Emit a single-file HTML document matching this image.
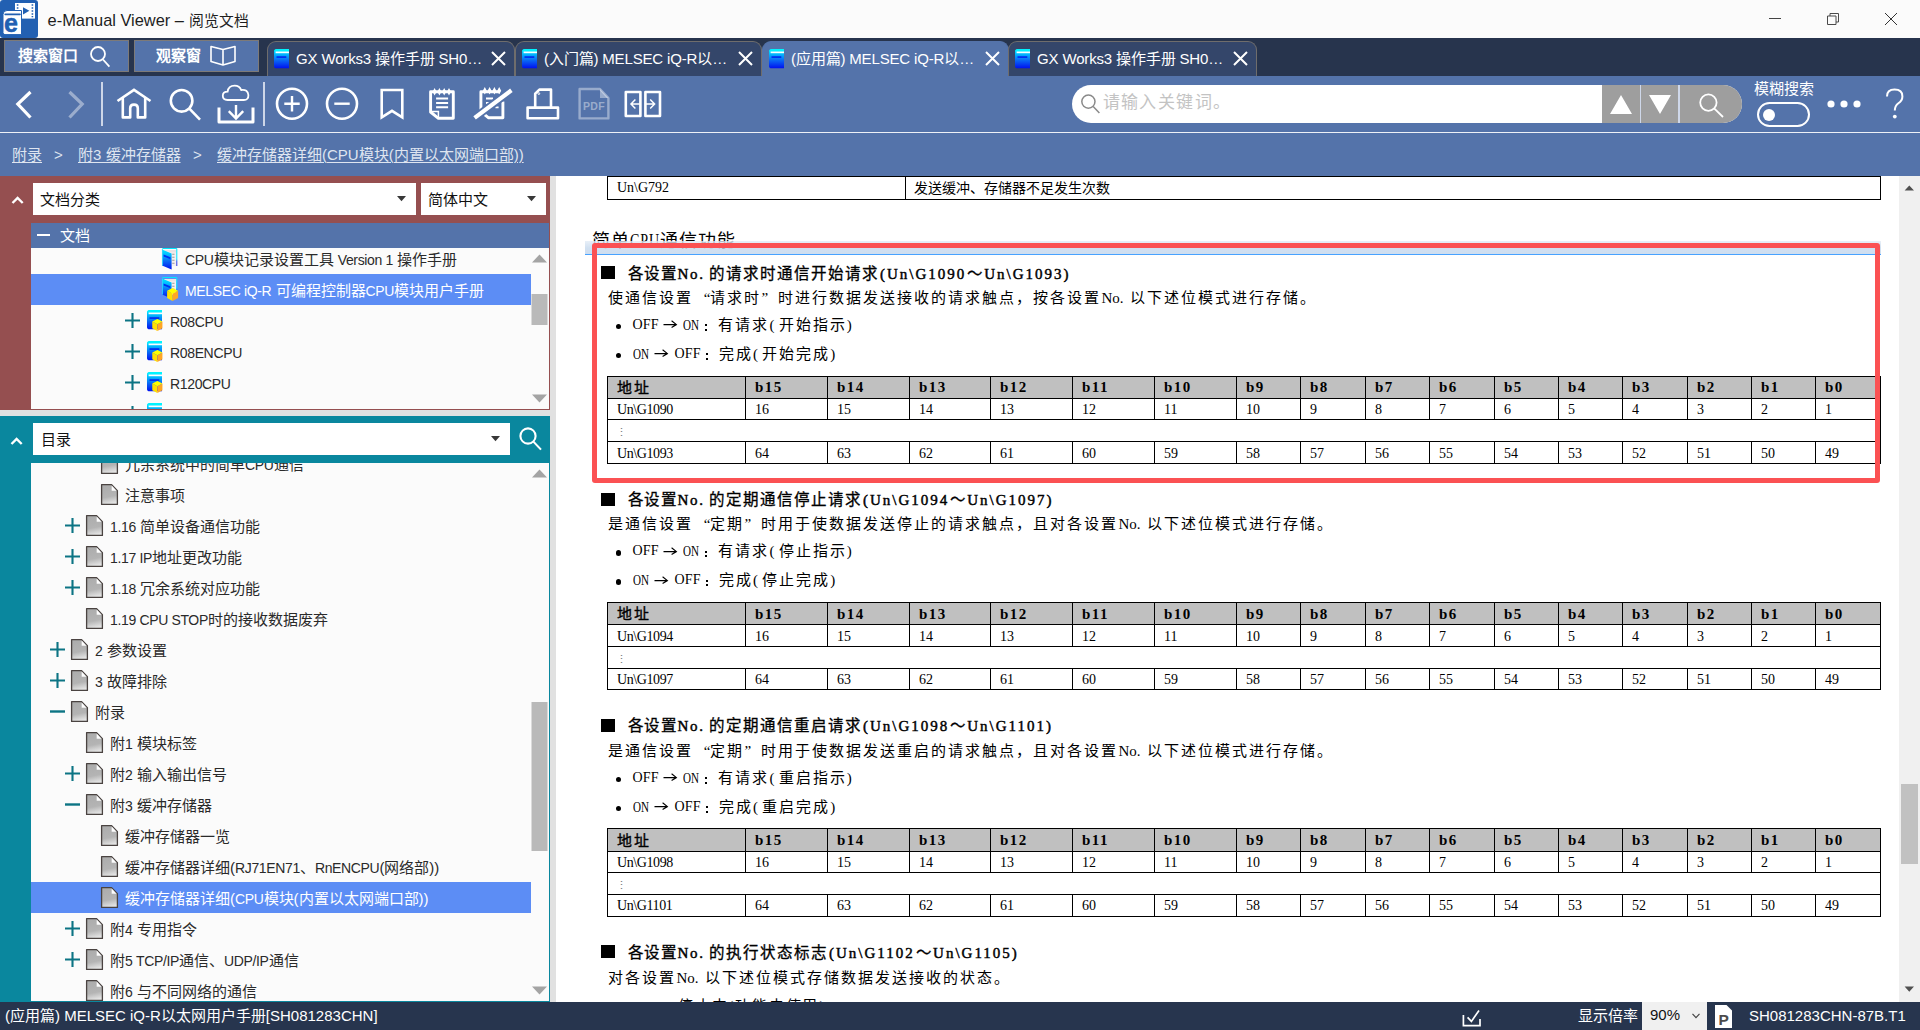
<!DOCTYPE html>
<html lang="zh-CN">
<head>
<meta charset="utf-8">
<title>e-Manual Viewer</title>
<style>
html,body{margin:0;padding:0}
body{width:1920px;height:1030px;overflow:hidden;position:relative;background:#fff;font-family:"Liberation Sans",sans-serif;color:#222}
.a{position:absolute}
.doc{font-family:"Liberation Serif",serif;color:#000}
.c{font-family:"Liberation Sans",sans-serif}
svg{position:absolute;overflow:visible}
#title{left:0;top:0;width:1920px;height:38px;background:#fbfbfb}
#title .t{left:47.6px;top:9.6px;font-size:16.4px;letter-spacing:0;line-height:20px;color:#1e1e1e;white-space:nowrap}
#tabs{left:0;top:38px;width:1920px;height:38px;background:#27344d}
.btn{top:2px;height:30px;border:1px solid #7d7a78;background:#5473aa;color:#fff;font-size:15px;font-weight:bold;line-height:30px;white-space:nowrap}
.btn span{top:0}
.tab{top:3px;height:36px;box-sizing:border-box;border:1px solid #6f6d6c;border-bottom:none;border-radius:9px 9px 0 0;background:#34466a;color:#fff;font-size:15px;letter-spacing:-0.15px;line-height:34px;white-space:nowrap}
.tab.act{background:#5473aa;border-color:#5473aa}
.tab .tx{left:28px;top:0}
#tool{left:0;top:76px;width:1920px;height:100px;background:#5473aa}
#tool .line{left:0;top:56px;width:1920px;height:1px;background:#eef1f7}
.bc{top:69px;font-size:15px;line-height:20px;color:#dfe5f0;white-space:nowrap}
.bc u{text-decoration-thickness:1px;text-underline-offset:2px}
#red{left:0;top:176px;width:550px;height:234px;background:#954f50}
#teal{left:0;top:416px;width:550px;height:586px;background:#0a879e}
.split{background:#e1e1e1}
.dd{background:#fff;height:32px;font-size:15px;line-height:33px;color:#111;white-space:nowrap}
.dd span{top:0}
.list{background:#fbfbfb;overflow:hidden}
.row{left:0;width:500px;height:31px;font-size:15px;line-height:34px;color:#2a2a2a;white-space:nowrap}
.row.sel{background:#5c8df5;color:#fff}
.row span{position:absolute;top:0}
.row i{font-style:normal;font-size:14px;letter-spacing:-0.35px}
#content{left:556px;top:176px;width:1343px;height:826px;background:#fff;overflow:hidden}
#vs{left:1899px;top:176px;width:21px;height:826px;background:#f0f0f0}
#status{left:0;top:1002px;width:1920px;height:28px;background:#27354e;color:#fff;font-size:15px;line-height:27px;white-space:nowrap}
#status span{top:0}
/* document */
.h{font-size:16px;font-weight:bold;letter-spacing:1.7px;line-height:20px;white-space:nowrap}
.p{font-size:15px;font-weight:300;letter-spacing:1.8px;line-height:20px;white-space:nowrap}
.sq{width:14px;height:13px;background:#000}
.dot{width:5.6px;height:5.6px;border-radius:3px;background:#000}
table.t{position:absolute;border-collapse:collapse;table-layout:fixed;font-size:14px;font-weight:300}
table.t td{border:1px solid #000;padding:1px 0 0 9px;height:19.4px;line-height:19px;white-space:nowrap;overflow:hidden}
table.t td:first-child{letter-spacing:-0.4px}
table.t tr.hd td:first-child{font-weight:500;-webkit-text-stroke:0.35px #000;letter-spacing:1.5px}
table.t tr.hd td{background:#c0c0c0;font-weight:bold;font-size:15px;letter-spacing:1.5px;height:20.5px}
</style>
</head>
<body>
<svg width="0" height="0" style="left:-10px;top:-10px">
<defs>
<linearGradient id="gfile" x1="0.2" y1="0.1" x2="0.35" y2="1"><stop offset="0" stop-color="#adadad"/><stop offset="0.6" stop-color="#b4b4b4"/><stop offset="1" stop-color="#e4e4e4"/></linearGradient>
<linearGradient id="gbook" x1="0" y1="0" x2="0" y2="1"><stop offset="0" stop-color="#00e4ff"/><stop offset="0.22" stop-color="#00c4ff"/><stop offset="0.55" stop-color="#0a70f5"/><stop offset="1" stop-color="#0010f0"/></linearGradient>
<linearGradient id="gedge" x1="0" y1="0" x2="0" y2="1"><stop offset="0" stop-color="#00e8ff"/><stop offset="0.6" stop-color="#00e0ff"/><stop offset="0.75" stop-color="#2a40e8"/><stop offset="1" stop-color="#2a30e0"/></linearGradient>
<symbol id="fi" viewBox="0 0 17 21" overflow="visible">
<path d="M0.6,0.6 H10.6 L16.4,6.6 V20.4 H0.6 Z" fill="url(#gfile)" stroke="#4a4341" stroke-width="1.3" stroke-linejoin="round"/>
<path d="M10.7,1.6 L15.5,6.7 H10.7 Z" fill="#fdfdfd"/>
</symbol>
<symbol id="bk" viewBox="0 0 15 19" overflow="visible">
<path d="M2.6,0 H15 V19.3 H2.6 Q0,19.3 0,16.7 V2.6 Q0,0 2.6,0 Z" fill="url(#gbook)"/>
<path d="M2.6,0 H15 V2.6 H0.2 Q0.3,0.2 2.6,0 Z" fill="#00f4ff"/>
<rect x="1.6" y="2.5" width="13.4" height="1.7" fill="#fafeff"/>
<rect x="2.5" y="7.2" width="9.8" height="1.8" fill="#0030f0"/>
</symbol>
<symbol id="cube" viewBox="0 0 11 13" overflow="visible">
<path d="M0,2.8 L5.5,5.6 V13 L0,10 Z" fill="#ffe000"/>
<path d="M5.5,5.6 L11,2.8 V10 L5.5,13 Z" fill="#ffa624"/>
<path d="M5.5,0 L11,2.8 L5.5,5.7 L0,2.8 Z" fill="#ffff00"/>
</symbol>
<symbol id="ob" viewBox="0 0 16 22" overflow="visible">
<path d="M2,2 H14.3 V18 H9.5 Z" fill="#f4eff1"/>
<path d="M2,2 H14.3 V4.6 H9 Z" fill="#ebe1e4"/>
<path d="M0.3,1.6 L0.7,0.5 H14.8 V18" stroke="url(#gedge)" stroke-width="1" fill="none"/>
<path d="M10.2,6.2 h2.3 M10.2,9.2 h2.3 M10.2,12.2 h2.3 M10.2,15.2 h2.3" stroke="#9b9b9b" stroke-width="1.1"/>
<path d="M0,1.5 L9.6,5.5 V21.6 L0,17.6 Z" fill="url(#gbook)"/>
<path d="M0.45,1.8 V17.6" stroke="#30d8ff" stroke-width="0.9"/>
<path d="M1.6,6.4 L8.4,9.3 V11.3 L1.6,8.4 Z" fill="#0030f0"/>
</symbol>
<symbol id="pl" viewBox="0 0 15 15" overflow="visible"><path d="M0,7.5 H15 M7.5,0 V15" stroke="#0c7484" stroke-width="2.1" fill="none"/></symbol>
<symbol id="mi" viewBox="0 0 15 15" overflow="visible"><path d="M0,7.5 H15" stroke="#0c7484" stroke-width="2.4" fill="none"/></symbol>
</defs>
</svg>

<!-- TITLE BAR -->
<div id="title" class="a">
  <svg style="left:0;top:0" width="38" height="38" viewBox="0 0 38 38">
    <rect x="0" y="0" width="38" height="38" rx="3" fill="#2260b2"/>
    <rect x="15" y="3" width="20" height="15.6" fill="#fff"/>
    <path d="M16.8,5 h1.6 M16.8,8 h1.6 M16.8,11 h1.6 M31.6,5 h1.6 M31.6,8 h1.6 M31.6,11 h1.6 M31.6,14 h1.6 M31.6,16.6 h1.6" stroke="#2260b2" stroke-width="1.3"/>
    <path d="M23,7.2 L29.4,10.8 L23,14.4 Z" fill="#2260b2"/>
    <path d="M3,14.5 Q3,10.5 7,10.5 H21.5 V34.6 H5 Q3,34.6 3,32.6 Z" fill="#fff" stroke="#2260b2" stroke-width="1"/>
    <path d="M5.2,14.3 H20" stroke="#2260b2" stroke-width="1.7" stroke-linecap="round"/>
    <text x="4" y="31.6" font-family="Liberation Sans, sans-serif" font-weight="bold" font-size="25" fill="#2260b2" stroke="#2260b2" stroke-width="0.5">e</text>
  </svg>
  <div class="a t">e-Manual Viewer – <span style="font-size:14.8px">阅览文档</span></div>
  <svg style="left:1769px;top:18px" width="12" height="2"><path d="M0,0.5 H12" stroke="#444" stroke-width="1"/></svg>
  <svg style="left:1827px;top:13px" width="12" height="12"><path d="M0.5,3 H9 V11.5 H0.5 Z M3,3 V0.5 H11.5 V9 H9" stroke="#4a4a4a" stroke-width="1" fill="none"/></svg>
  <svg style="left:1885px;top:13px" width="12" height="12"><path d="M0,0 L12,12 M12,0 L0,12" stroke="#333" stroke-width="1" fill="none"/></svg>
</div>

<!-- TAB STRIP -->
<div id="tabs" class="a">
  <div class="a btn" style="left:4px;width:123px"><span class="a" style="left:13px">搜索窗口</span>
    <svg style="left:84px;top:4px" width="24" height="24"><circle cx="9" cy="9" r="7" stroke="#fff" stroke-width="1.8" fill="none"/><path d="M14,14.5 L20.4,21.6" stroke="#fff" stroke-width="1.8"/></svg></div>
  <div class="a btn" style="left:134px;width:123px"><span class="a" style="left:21px">观察窗</span>
    <svg style="left:75px;top:4px" width="26" height="22"><path d="M1,1.5 L13,4.5 L25,1.5 V16.5 L13,20 L1,16.5 Z M13,4.5 V20" stroke="#fff" stroke-width="1.6" fill="none" stroke-linejoin="round"/></svg></div>
<div class="a tab" style="left:267px;width:248px"><svg style="left:6px;top:7px" width="15" height="19"><use href="#bk"/></svg><span class="a tx">GX Works3 操作手册 SH0…</span><svg style="left:223px;top:9px" width="15" height="15"><path d="M1,1 L14,14 M14,1 L1,14" stroke="#fff" stroke-width="2" fill="none"/></svg></div><div class="a tab" style="left:515px;width:247px"><svg style="left:6px;top:7px" width="15" height="19"><use href="#bk"/></svg><span class="a tx">(入门篇) MELSEC iQ-R以…</span><svg style="left:222px;top:9px" width="15" height="15"><path d="M1,1 L14,14 M14,1 L1,14" stroke="#fff" stroke-width="2" fill="none"/></svg></div><div class="a tab act" style="left:762px;width:247px"><svg style="left:6px;top:7px" width="15" height="19"><use href="#bk"/></svg><span class="a tx">(应用篇) MELSEC iQ-R以…</span><svg style="left:222px;top:9px" width="15" height="15"><path d="M1,1 L14,14 M14,1 L1,14" stroke="#fff" stroke-width="2" fill="none"/></svg></div><div class="a tab" style="left:1008px;width:249px"><svg style="left:6px;top:7px" width="15" height="19"><use href="#bk"/></svg><span class="a tx">GX Works3 操作手册 SH0…</span><svg style="left:224px;top:9px" width="15" height="15"><path d="M1,1 L14,14 M14,1 L1,14" stroke="#fff" stroke-width="2" fill="none"/></svg></div>
</div>

<!-- TOOLBAR + BREADCRUMB -->
<div id="tool" class="a">
  <div class="a line"></div>
  <svg style="left:0;top:0" width="700" height="56" fill="none" stroke="#fff" stroke-width="2.6">
    <g stroke-width="3.2"><path d="M30.5,16 L17.8,28 L30.5,41.5"/><path d="M69.5,16 L82.2,28 L69.5,41.5" stroke-opacity="0.42"/></g>
    <path d="M102,6 V50 M264,6 V50" stroke="#cdd6e8" stroke-width="2"/>
    <!-- home -->
    <path d="M117.5,25 L134,13.8 L150.5,25" stroke-linejoin="miter"/>
    <path d="M122.8,22 V41.4 H130.2 V32 Q130.2,28.6 134,28.6 Q137.8,28.6 137.8,32 V41.4 H145.2 V22" stroke-linejoin="round"/>
    <!-- search -->
    <circle cx="181.6" cy="24.8" r="10.8"/><path d="M189.4,32.6 L200,43.6"/>
    <!-- cloud download -->
    <path d="M219,31.5 V46 H253 V31.5" stroke-width="3" stroke-linejoin="round"/>
    <path d="M236,29 V42.5 M228.8,35.2 L236,42.5 L243.2,35.2" stroke-width="2.4"/>
    <path d="M227.5,24 Q222.8,24 222.8,19.8 Q222.8,15.6 227.6,15.6 Q228.4,9.6 234.6,9.6 Q239.6,9.6 241.2,14 Q247.8,13.2 248.4,19 Q248.6,24 243.8,24 Z" stroke-width="1.8"/>
    <!-- zoom in / out -->
    <circle cx="292" cy="27.7" r="15"/><path d="M284.3,27.7 H299.7 M292,20 V35.4" stroke-width="2.4"/>
    <circle cx="342" cy="27.7" r="15"/><path d="M334.3,27.7 H349.7" stroke-width="2.4"/>
    <!-- bookmark -->
    <path d="M381.7,14 H402.3 V41.4 L392,34.8 L381.7,41.4 Z" stroke-linejoin="miter"/>
    <!-- notepad -->
    <path d="M430.6,15.7 V36 L438.4,42.3 H453.3 V15.7 Z" stroke-width="2.9" stroke-linejoin="round"/>
    <path d="M432.6,15.7 L434.6,12 L436.6,15.7 L434.6,19.4 Z M437.4,15.7 L439.4,12 L441.4,15.7 L439.4,19.4 Z M442.2,15.7 L444.2,12 L446.2,15.7 L444.2,19.4 Z M447,15.7 L449,12 L451,15.7 L449,19.4 Z" fill="#fff" stroke="none"/>
    <path d="M436.1,22.5 H448.1 M436.1,26.9 H448.1 M436.1,31.3 H448.1" stroke-width="2"/>
    <path d="M431.6,35.4 H438.4 V41.6" stroke-width="1.5"/>
    <!-- notepad slash -->
    <path d="M480.9,34 V15.7 H500 M502.9,25.5 V41.8 H488.6 L484.6,38.6" stroke-width="2.9" stroke-linejoin="round"/>
    <path d="M482.8,14.8 L484.8,11 L486.8,14.8 L484.8,18.6 Z M487.6,14.8 L489.6,11 L491.6,14.8 L489.6,18.6 Z M492.4,14.8 L494.4,11 L496.4,14.8 L494.4,18.6 Z M497.2,14.8 L499.2,11 L501.2,14.8 L499.2,18.6 Z" fill="#fff" stroke="none"/>
    <path d="M486,22.5 H493 M486,27 H489 M495.4,31.3 H498.6" stroke-width="1.8"/>
    <path d="M474.6,41.9 L511.4,14.3" stroke="#5473aa" stroke-width="8"/>
    <path d="M474.6,41.9 L511.4,14.3" stroke-width="4.2"/>
    <!-- print -->
    <path d="M527.6,31.6 H558 V42.2 H527.6 Z" stroke-linejoin="round"/>
    <path d="M535.2,31 V17.6 L539.4,13.6 H551 V31" stroke-linejoin="round"/>
    <circle cx="538.8" cy="17.6" r="0.9" stroke-width="1"/>
    <!-- pdf (disabled) -->
    <g stroke-opacity="0.4" fill-opacity="0.4"><path d="M579.6,13 H600 L608.4,22 V42.4 H579.6 Z" stroke-width="2.4" stroke-linejoin="round"/><path d="M600,13 L608.4,22 H600 Z" fill="#fff" stroke="none"/></g>
    <!-- side by side -->
    <path d="M625.8,16 H640.4 V40 H625.8 Z M645.4,16 H660 V40 H645.4 Z" stroke-width="2.6" stroke-linejoin="round"/>
    <path d="M631,28 H640 M635.4,23.5 L631,28 L635.4,32.5 M645.4,28 H654.6 M650.2,23.5 L654.6,28 L650.2,32.5" stroke-width="1.5"/>
  </svg>
  <div class="a" style="left:581px;top:23px;width:26px;text-align:center;font-size:10.5px;font-weight:bold;color:rgba(255,255,255,.42);letter-spacing:.3px;line-height:14px">PDF</div>

  <!-- search box -->
  <div class="a" style="left:1072px;top:9px;width:670px;height:38px;border-radius:19px;background:#fff;overflow:hidden">
    <div class="a" style="left:530px;top:0;width:140px;height:38px;background:#9e9e9e"></div>
    <div class="a" style="left:567.5px;top:0;width:1.5px;height:38px;background:#cfd8ea"></div>
    <div class="a" style="left:606px;top:0;width:1.5px;height:38px;background:#cfd8ea"></div>
    <svg style="left:0;top:0" width="670" height="38">
      <circle cx="16.4" cy="16.6" r="6.6" stroke="#8a8a8a" stroke-width="1.5" fill="none"/><path d="M21.2,21.6 L27.4,28" stroke="#8a8a8a" stroke-width="1.5"/>
      <path d="M538,29 L549,10 L560,29 Z M577,10 L599,10 L588,29 Z" fill="#fff"/>
      <circle cx="636.4" cy="17.6" r="8.2" stroke="#fff" stroke-width="1.8" fill="none"/><path d="M642.4,23.6 L651,32" stroke="#fff" stroke-width="1.8"/>
    </svg>
    <div class="a" style="left:30.5px;top:8px;font-size:17px;letter-spacing:1.45px;line-height:20px;color:#c3c3c3;white-space:nowrap">请输入关键词。</div>
  </div>
  <div class="a" style="left:1754px;top:4px;font-size:15px;line-height:18px;color:#fff;white-space:nowrap">模糊搜索</div>
  <div class="a" style="left:1757px;top:26px;width:49px;height:21px;border:2.5px solid #fff;border-radius:13px"></div>
  <div class="a" style="left:1763px;top:32.5px;width:12px;height:12px;border-radius:6px;background:#fff"></div>
  <svg style="left:1826px;top:23px" width="36" height="10"><circle cx="5" cy="5" r="3.6" fill="#fff"/><circle cx="18" cy="5" r="3.6" fill="#fff"/><circle cx="31" cy="5" r="3.6" fill="#fff"/></svg>
  <svg style="left:1884px;top:11px" width="22" height="34" fill="none" stroke="#fff"><path d="M3,9.5 Q3,2.6 10.6,2.6 Q18.4,2.6 18.4,9.4 Q18.4,13.4 14.4,16.2 Q10.8,18.8 10.8,23.6" stroke-width="2"/><circle cx="10.8" cy="29.6" r="1.9" fill="#fff" stroke="none"/></svg>

  <div class="a bc" style="left:12px"><u>附录</u></div>
  <div class="a bc" style="left:54px">&gt;</div>
  <div class="a bc" style="left:78px"><u>附3 缓冲存储器</u></div>
  <div class="a bc" style="left:193px">&gt;</div>
  <div class="a bc" style="left:217px"><u>缓冲存储器详细(CPU模块(内置以太网端口部))</u></div>
</div>

<!-- LEFT: DOCUMENT PANEL -->
<div id="red" class="a">
  <svg style="left:10.5px;top:20px" width="13" height="9"><path d="M1.5,7 L6.6,2 L11.7,7" stroke="#fff" stroke-width="2.4" fill="none"/></svg>
  <div class="a dd" style="left:33px;top:7px;width:383px"><span class="a" style="left:7px">文档分类</span><svg style="left:364px;top:13px" width="9" height="5"><path d="M0,0 H9 L4.5,5.2 Z" fill="#383838"/></svg></div>
  <div class="a dd" style="left:421px;top:7px;width:125px"><span class="a" style="left:7px">简体中文</span><svg style="left:106px;top:13px" width="9" height="5"><path d="M0,0 H9 L4.5,5.2 Z" fill="#383838"/></svg></div>
  <div class="a" style="left:31px;top:47px;width:518px;height:25px;background:#5473aa;color:#fff;font-size:15px;line-height:26px"><div class="a" style="left:6px;top:11px;width:13px;height:2.2px;background:#fff"></div><span class="a" style="left:29px;top:0">文档</span></div>
  <div id="doclist" class="a list" style="left:31px;top:72px;width:518px;height:161px">
<div class="a row" style="top:-5px"><svg style="left:131px;top:5.2px" width="16" height="22"><use href="#ob"/></svg><span style="left:154px"><i>CPU</i>模块记录设置工具 <i>Version 1</i> 操作手册</span></div>
<div class="a row sel" style="top:26px"><svg style="left:131px;top:3.3px" width="16" height="22"><use href="#ob"/></svg><svg style="left:136px;top:13.899999999999999px" width="11.2" height="13"><use href="#cube"/></svg><span style="left:154px"><i>MELSEC iQ-R</i> 可编程控制器<i>CPU</i>模块用户手册</span></div>
<div class="a row" style="top:57px"><svg style="left:93.5px;top:8px" width="15" height="15"><use href="#pl"/></svg><svg style="left:116px;top:5px" width="15" height="19"><use href="#bk"/></svg><svg style="left:121.3px;top:14px" width="10.7" height="12"><use href="#cube"/></svg><span style="left:139px"><i>R08CPU</i></span></div>
<div class="a row" style="top:88px"><svg style="left:93.5px;top:8px" width="15" height="15"><use href="#pl"/></svg><svg style="left:116px;top:5px" width="15" height="19"><use href="#bk"/></svg><svg style="left:121.3px;top:14px" width="10.7" height="12"><use href="#cube"/></svg><span style="left:139px"><i>R08ENCPU</i></span></div>
<div class="a row" style="top:119px"><svg style="left:93.5px;top:8px" width="15" height="15"><use href="#pl"/></svg><svg style="left:116px;top:5px" width="15" height="19"><use href="#bk"/></svg><svg style="left:121.3px;top:14px" width="10.7" height="12"><use href="#cube"/></svg><span style="left:139px"><i>R120CPU</i></span></div>
<div class="a row" style="top:150px"><svg style="left:93.5px;top:8px" width="15" height="15"><use href="#pl"/></svg><svg style="left:116px;top:5px" width="15" height="19"><use href="#bk"/></svg><svg style="left:121.3px;top:14px" width="10.7" height="12"><use href="#cube"/></svg><span style="left:139px"><i>R120ENCPU</i></span></div>
<svg style="left:500px;top:0" width="17" height="161"><path d="M1,14.5 L8.5,6.5 L16,14.5 Z M1,146.5 L8.5,154.5 L16,146.5 Z" fill="#a4a4a4"/><rect x="0.5" y="46" width="16" height="31" fill="#b9b9b9"/></svg>
  </div>
</div>
<div class="a split" style="left:0;top:410px;width:556px;height:6px"></div>
<div class="a split" style="left:550px;top:176px;width:6px;height:826px"></div>

<!-- LEFT: TOC PANEL -->
<div id="teal" class="a">
  <svg style="left:10px;top:20.5px" width="13" height="9"><path d="M1.5,7 L6.6,2 L11.7,7" stroke="#fff" stroke-width="2.4" fill="none"/></svg>
  <div class="a dd" style="left:33px;top:7px;width:477px"><span class="a" style="left:7.5px">目录</span><svg style="left:458px;top:13px" width="9" height="5"><path d="M0,0 H9 L4.5,5.2 Z" fill="#383838"/></svg></div>
  <svg style="left:518px;top:10px" width="26" height="26"><circle cx="10" cy="10" r="7.6" stroke="#fff" stroke-width="2.1" fill="none"/><path d="M15.4,15.6 L23,23.6" stroke="#fff" stroke-width="2.1"/></svg>
  <div id="toclist" class="a list" style="left:31px;top:47px;width:518px;height:538px">
<div class="a row" style="top:-15px"><svg style="left:70px;top:5px" width="17" height="21"><use href="#fi"/></svg><span style="left:94px">冗余系统中的简单<i>CPU</i>通信</span></div>
<div class="a row" style="top:16px"><svg style="left:70px;top:5px" width="17" height="21"><use href="#fi"/></svg><span style="left:94px">注意事项</span></div>
<div class="a row" style="top:47px"><svg style="left:33.5px;top:8px" width="15" height="15"><use href="#pl"/></svg><svg style="left:55px;top:5px" width="17" height="21"><use href="#fi"/></svg><span style="left:79px"><i>1.16</i> 简单设备通信功能</span></div>
<div class="a row" style="top:78px"><svg style="left:33.5px;top:8px" width="15" height="15"><use href="#pl"/></svg><svg style="left:55px;top:5px" width="17" height="21"><use href="#fi"/></svg><span style="left:79px"><i>1.17 IP</i>地址更改功能</span></div>
<div class="a row" style="top:109px"><svg style="left:33.5px;top:8px" width="15" height="15"><use href="#pl"/></svg><svg style="left:55px;top:5px" width="17" height="21"><use href="#fi"/></svg><span style="left:79px"><i>1.18</i> 冗余系统对应功能</span></div>
<div class="a row" style="top:140px"><svg style="left:55px;top:5px" width="17" height="21"><use href="#fi"/></svg><span style="left:79px"><i>1.19 CPU STOP</i>时的接收数据废弃</span></div>
<div class="a row" style="top:171px"><svg style="left:18.8px;top:8px" width="15" height="15"><use href="#pl"/></svg><svg style="left:40px;top:5px" width="17" height="21"><use href="#fi"/></svg><span style="left:64px"><i>2</i> 参数设置</span></div>
<div class="a row" style="top:202px"><svg style="left:18.8px;top:8px" width="15" height="15"><use href="#pl"/></svg><svg style="left:40px;top:5px" width="17" height="21"><use href="#fi"/></svg><span style="left:64px"><i>3</i> 故障排除</span></div>
<div class="a row" style="top:233px"><svg style="left:18.8px;top:8px" width="15" height="15"><use href="#mi"/></svg><svg style="left:40px;top:5px" width="17" height="21"><use href="#fi"/></svg><span style="left:64px">附录</span></div>
<div class="a row" style="top:264px"><svg style="left:55px;top:5px" width="17" height="21"><use href="#fi"/></svg><span style="left:79px">附<i>1</i> 模块标签</span></div>
<div class="a row" style="top:295px"><svg style="left:33.5px;top:8px" width="15" height="15"><use href="#pl"/></svg><svg style="left:55px;top:5px" width="17" height="21"><use href="#fi"/></svg><span style="left:79px">附<i>2</i> 输入输出信号</span></div>
<div class="a row" style="top:326px"><svg style="left:33.5px;top:8px" width="15" height="15"><use href="#mi"/></svg><svg style="left:55px;top:5px" width="17" height="21"><use href="#fi"/></svg><span style="left:79px">附<i>3</i> 缓冲存储器</span></div>
<div class="a row" style="top:357px"><svg style="left:70px;top:5px" width="17" height="21"><use href="#fi"/></svg><span style="left:94px">缓冲存储器一览</span></div>
<div class="a row" style="top:388px"><svg style="left:70px;top:5px" width="17" height="21"><use href="#fi"/></svg><span style="left:94px">缓冲存储器详细(<i>RJ71EN71</i>、<i>RnENCPU</i>(网络部))</span></div>
<div class="a row sel" style="top:419px"><svg style="left:70px;top:5px" width="17" height="21"><use href="#fi"/></svg><span style="left:94px">缓冲存储器详细(<i>CPU</i>模块(内置以太网端口部))</span></div>
<div class="a row" style="top:450px"><svg style="left:33.5px;top:8px" width="15" height="15"><use href="#pl"/></svg><svg style="left:55px;top:5px" width="17" height="21"><use href="#fi"/></svg><span style="left:79px">附<i>4</i> 专用指令</span></div>
<div class="a row" style="top:481px"><svg style="left:33.5px;top:8px" width="15" height="15"><use href="#pl"/></svg><svg style="left:55px;top:5px" width="17" height="21"><use href="#fi"/></svg><span style="left:79px">附<i>5 TCP/IP</i>通信、<i>UDP/IP</i>通信</span></div>
<div class="a row" style="top:512px"><svg style="left:55px;top:5px" width="17" height="21"><use href="#fi"/></svg><span style="left:79px">附<i>6</i> 与不同网络的通信</span></div>
<svg style="left:500px;top:0" width="17" height="538"><path d="M1,14.5 L8.5,6.5 L16,14.5 Z M1,523.5 L8.5,531.5 L16,523.5 Z" fill="#a4a4a4"/><rect x="0.5" y="239" width="16" height="149" fill="#b9b9b9"/></svg>
  </div>
</div>

<!-- CONTENT -->
<div id="content" class="a doc">
  <div class="a" style="left:51px;top:-1px;width:1272px;height:21.5px;border:1px solid #000;border-top-width:2px"></div>
  <div class="a" style="left:348.5px;top:0;width:1px;height:23px;background:#000"></div>
  <div class="a" style="left:61px;top:1.5px;font-size:14px;line-height:20px;white-space:nowrap">Un\G792</div>
  <div class="a" style="left:357.6px;top:1.5px;font-size:14px;line-height:20px;white-space:nowrap" ><span class="c">发送缓冲、存储器不足发生次数</span></div>
  <div class="a" style="left:35.5px;top:53px;font-size:18px;letter-spacing:1.15px;line-height:24px;white-space:nowrap"><span class="c">简单</span><span style="display:inline-block;transform:scaleX(0.78);transform-origin:0 50%;margin-right:-8.5px">CPU</span><span class="c">通信功能</span></div>
  <div class="a" style="left:29px;top:65px;width:1295.5px;height:12.5px;background:linear-gradient(#e4edf7,#c6d9ee 55%,#c3d7ed);opacity:.8;border-bottom:1.5px solid #1b8bff"></div>
<div class="a sq" style="left:45px;top:90.10px"></div><div class="a h" style="left:71.5px;top:87.60px"><span class="c" style="display:inline-block;width:50.10px;font-size:15.5px;letter-spacing:0.70px;font-weight:500;-webkit-text-stroke:0.3px #000;">各设置</span><span style="display:inline-block;width:31.2px;letter-spacing:1.6px;font-weight:400;font-size:15px;-webkit-text-stroke:0.45px #000;">No.</span><span class="c" style="display:inline-block;width:170.20px;font-size:15.5px;letter-spacing:1.02px;font-weight:500;-webkit-text-stroke:0.3px #000;">的请求时通信开始请求</span><span style="display:inline-block;width:87.2px;letter-spacing:2.0px;font-weight:400;font-size:15px;-webkit-text-stroke:0.45px #000;padding-left:1px;">(Un\G1090</span><span class="c" style="display:inline-block;width:17.00px;font-size:15.5px;letter-spacing:1.00px;font-weight:500;-webkit-text-stroke:0.3px #000;">～</span><span style="display:inline-block;width:88px;letter-spacing:2.0px;font-weight:400;font-size:15px;-webkit-text-stroke:0.45px #000;">Un\G1093)</span></div>
<div class="a p" style="left:52.39999999999998px;top:111.90px"><span class="c" style="display:inline-block;width:85.00px;font-size:15px;letter-spacing:2.00px;">使通信设置</span><span style="display:inline-block;width:17px;text-align:right;letter-spacing:0">“</span><span class="c" style="display:inline-block;width:51.00px;font-size:15px;letter-spacing:2.00px;">请求时</span><span style="display:inline-block;width:17px;text-align:left;letter-spacing:0">”</span><span class="c" style="display:inline-block;width:323.00px;font-size:15px;letter-spacing:2.00px;">时进行数据发送接收的请求触点，按各设置</span><span style="display:inline-block;width:28.6px;letter-spacing:0px;">No.</span><span class="c" style="display:inline-block;width:187.00px;font-size:15px;letter-spacing:2.00px;">以下述位模式进行存储。</span></div>
<div class="a dot" style="left:59.60000000000002px;top:147.80px"></div><svg style="left:107px;top:144.30px" width="15" height="8"><path d="M0.5,4.6 H13 M8.6,0.8 L13.4,4.6 L8.6,7.4" stroke="#000" stroke-width="1.1" fill="none"/></svg><div class="a p" style="left:76.5px;top:138.80px;letter-spacing:0.2px;font-size:14px;">OFF</div><div class="a p" style="left:127.39999999999998px;top:138.80px;letter-spacing:0px;font-size:14.2px;transform:scaleX(0.78);transform-origin:0 0;">ON</div><div class="a" style="left:149.2px;top:148.30px;width:2px;height:2px;background:#000"></div><div class="a" style="left:149.2px;top:153.00px;width:2px;height:2px;background:#000"></div><div class="a p" style="left:162.39999999999998px;top:138.80px"><span class="c" style="display:inline-block;width:51.00px;font-size:15px;letter-spacing:2.00px;">有请求</span><span style="display:inline-block;width:9.3px;letter-spacing:0px;">(</span><span class="c" style="display:inline-block;width:68.00px;font-size:15px;letter-spacing:2.00px;">开始指示</span><span style="display:inline-block;width:9.3px;letter-spacing:0px;">)</span></div>
<div class="a dot" style="left:59.60000000000002px;top:176.80px"></div><svg style="left:98px;top:173.30px" width="15" height="8"><path d="M0.5,4.6 H13 M8.6,0.8 L13.4,4.6 L8.6,7.4" stroke="#000" stroke-width="1.1" fill="none"/></svg><div class="a p" style="left:76.5px;top:167.80px;letter-spacing:0px;font-size:14.2px;transform:scaleX(0.78);transform-origin:0 0;">ON</div><div class="a p" style="left:118.39999999999998px;top:167.80px;letter-spacing:0.2px;font-size:14px;">OFF</div><div class="a" style="left:149.7px;top:177.30px;width:2px;height:2px;background:#000"></div><div class="a" style="left:149.7px;top:182.00px;width:2px;height:2px;background:#000"></div><div class="a p" style="left:163px;top:167.80px"><span class="c" style="display:inline-block;width:34.00px;font-size:15px;letter-spacing:2.00px;">完成</span><span style="display:inline-block;width:9.3px;letter-spacing:0px;">(</span><span class="c" style="display:inline-block;width:68.00px;font-size:15px;letter-spacing:2.00px;">开始完成</span><span style="display:inline-block;width:9.3px;letter-spacing:0px;">)</span></div>
<table class="t" style="left:51px;top:199.50px;width:1274px"><col style="width:138px"><col style="width:82px"><col style="width:82px"><col style="width:81px"><col style="width:82px"><col style="width:82px"><col style="width:82px"><col style="width:64px"><col style="width:65px"><col style="width:64px"><col style="width:65px"><col style="width:64px"><col style="width:64px"><col style="width:65px"><col style="width:64px"><col style="width:64px"><col style="width:65px"><tr class="hd"><td><span class="c">地址</span></td><td>b15</td><td>b14</td><td>b13</td><td>b12</td><td>b11</td><td>b10</td><td>b9</td><td>b8</td><td>b7</td><td>b6</td><td>b5</td><td>b4</td><td>b3</td><td>b2</td><td>b1</td><td>b0</td></tr><tr><td>Un\G1090</td><td>16</td><td>15</td><td>14</td><td>13</td><td>12</td><td>11</td><td>10</td><td>9</td><td>8</td><td>7</td><td>6</td><td>5</td><td>4</td><td>3</td><td>2</td><td>1</td></tr><tr><td colspan="17"><span style="color:#777;font-size:11px;position:relative;left:-1.5px;top:1px">⋮</span></td></tr><tr><td>Un\G1093</td><td>64</td><td>63</td><td>62</td><td>61</td><td>60</td><td>59</td><td>58</td><td>57</td><td>56</td><td>55</td><td>54</td><td>53</td><td>52</td><td>51</td><td>50</td><td>49</td></tr></table>
<div class="a sq" style="left:45px;top:316.50px"></div><div class="a h" style="left:71.5px;top:314.00px"><span class="c" style="display:inline-block;width:50.10px;font-size:15.5px;letter-spacing:0.70px;font-weight:500;-webkit-text-stroke:0.3px #000;">各设置</span><span style="display:inline-block;width:31.2px;letter-spacing:1.6px;font-weight:400;font-size:15px;-webkit-text-stroke:0.45px #000;">No.</span><span class="c" style="display:inline-block;width:153.18px;font-size:15.5px;letter-spacing:1.02px;font-weight:500;-webkit-text-stroke:0.3px #000;">的定期通信停止请求</span><span style="display:inline-block;width:87.2px;letter-spacing:2.0px;font-weight:400;font-size:15px;-webkit-text-stroke:0.45px #000;padding-left:1px;">(Un\G1094</span><span class="c" style="display:inline-block;width:17.00px;font-size:15.5px;letter-spacing:1.00px;font-weight:500;-webkit-text-stroke:0.3px #000;">～</span><span style="display:inline-block;width:88px;letter-spacing:2.0px;font-weight:400;font-size:15px;-webkit-text-stroke:0.45px #000;">Un\G1097)</span></div>
<div class="a p" style="left:52.39999999999998px;top:338.30px"><span class="c" style="display:inline-block;width:85.00px;font-size:15px;letter-spacing:2.00px;">是通信设置</span><span style="display:inline-block;width:17px;text-align:right;letter-spacing:0">“</span><span class="c" style="display:inline-block;width:34.00px;font-size:15px;letter-spacing:2.00px;">定期</span><span style="display:inline-block;width:17px;text-align:left;letter-spacing:0">”</span><span class="c" style="display:inline-block;width:357.00px;font-size:15px;letter-spacing:2.00px;">时用于使数据发送停止的请求触点，且对各设置</span><span style="display:inline-block;width:28.6px;letter-spacing:0px;">No.</span><span class="c" style="display:inline-block;width:187.00px;font-size:15px;letter-spacing:2.00px;">以下述位模式进行存储。</span></div>
<div class="a dot" style="left:59.60000000000002px;top:374.20px"></div><svg style="left:107px;top:370.70px" width="15" height="8"><path d="M0.5,4.6 H13 M8.6,0.8 L13.4,4.6 L8.6,7.4" stroke="#000" stroke-width="1.1" fill="none"/></svg><div class="a p" style="left:76.5px;top:365.20px;letter-spacing:0.2px;font-size:14px;">OFF</div><div class="a p" style="left:127.39999999999998px;top:365.20px;letter-spacing:0px;font-size:14.2px;transform:scaleX(0.78);transform-origin:0 0;">ON</div><div class="a" style="left:149.2px;top:374.70px;width:2px;height:2px;background:#000"></div><div class="a" style="left:149.2px;top:379.40px;width:2px;height:2px;background:#000"></div><div class="a p" style="left:162.39999999999998px;top:365.20px"><span class="c" style="display:inline-block;width:51.00px;font-size:15px;letter-spacing:2.00px;">有请求</span><span style="display:inline-block;width:9.3px;letter-spacing:0px;">(</span><span class="c" style="display:inline-block;width:68.00px;font-size:15px;letter-spacing:2.00px;">停止指示</span><span style="display:inline-block;width:9.3px;letter-spacing:0px;">)</span></div>
<div class="a dot" style="left:59.60000000000002px;top:403.20px"></div><svg style="left:98px;top:399.70px" width="15" height="8"><path d="M0.5,4.6 H13 M8.6,0.8 L13.4,4.6 L8.6,7.4" stroke="#000" stroke-width="1.1" fill="none"/></svg><div class="a p" style="left:76.5px;top:394.20px;letter-spacing:0px;font-size:14.2px;transform:scaleX(0.78);transform-origin:0 0;">ON</div><div class="a p" style="left:118.39999999999998px;top:394.20px;letter-spacing:0.2px;font-size:14px;">OFF</div><div class="a" style="left:149.7px;top:403.70px;width:2px;height:2px;background:#000"></div><div class="a" style="left:149.7px;top:408.40px;width:2px;height:2px;background:#000"></div><div class="a p" style="left:163px;top:394.20px"><span class="c" style="display:inline-block;width:34.00px;font-size:15px;letter-spacing:2.00px;">完成</span><span style="display:inline-block;width:9.3px;letter-spacing:0px;">(</span><span class="c" style="display:inline-block;width:68.00px;font-size:15px;letter-spacing:2.00px;">停止完成</span><span style="display:inline-block;width:9.3px;letter-spacing:0px;">)</span></div>
<table class="t" style="left:51px;top:425.90px;width:1274px"><col style="width:138px"><col style="width:82px"><col style="width:82px"><col style="width:81px"><col style="width:82px"><col style="width:82px"><col style="width:82px"><col style="width:64px"><col style="width:65px"><col style="width:64px"><col style="width:65px"><col style="width:64px"><col style="width:64px"><col style="width:65px"><col style="width:64px"><col style="width:64px"><col style="width:65px"><tr class="hd"><td><span class="c">地址</span></td><td>b15</td><td>b14</td><td>b13</td><td>b12</td><td>b11</td><td>b10</td><td>b9</td><td>b8</td><td>b7</td><td>b6</td><td>b5</td><td>b4</td><td>b3</td><td>b2</td><td>b1</td><td>b0</td></tr><tr><td>Un\G1094</td><td>16</td><td>15</td><td>14</td><td>13</td><td>12</td><td>11</td><td>10</td><td>9</td><td>8</td><td>7</td><td>6</td><td>5</td><td>4</td><td>3</td><td>2</td><td>1</td></tr><tr><td colspan="17"><span style="color:#777;font-size:11px;position:relative;left:-1.5px;top:1px">⋮</span></td></tr><tr><td>Un\G1097</td><td>64</td><td>63</td><td>62</td><td>61</td><td>60</td><td>59</td><td>58</td><td>57</td><td>56</td><td>55</td><td>54</td><td>53</td><td>52</td><td>51</td><td>50</td><td>49</td></tr></table>
<div class="a sq" style="left:45px;top:542.90px"></div><div class="a h" style="left:71.5px;top:540.40px"><span class="c" style="display:inline-block;width:50.10px;font-size:15.5px;letter-spacing:0.70px;font-weight:500;-webkit-text-stroke:0.3px #000;">各设置</span><span style="display:inline-block;width:31.2px;letter-spacing:1.6px;font-weight:400;font-size:15px;-webkit-text-stroke:0.45px #000;">No.</span><span class="c" style="display:inline-block;width:153.18px;font-size:15.5px;letter-spacing:1.02px;font-weight:500;-webkit-text-stroke:0.3px #000;">的定期通信重启请求</span><span style="display:inline-block;width:87.2px;letter-spacing:2.0px;font-weight:400;font-size:15px;-webkit-text-stroke:0.45px #000;padding-left:1px;">(Un\G1098</span><span class="c" style="display:inline-block;width:17.00px;font-size:15.5px;letter-spacing:1.00px;font-weight:500;-webkit-text-stroke:0.3px #000;">～</span><span style="display:inline-block;width:88px;letter-spacing:2.0px;font-weight:400;font-size:15px;-webkit-text-stroke:0.45px #000;">Un\G1101)</span></div>
<div class="a p" style="left:52.39999999999998px;top:564.70px"><span class="c" style="display:inline-block;width:85.00px;font-size:15px;letter-spacing:2.00px;">是通信设置</span><span style="display:inline-block;width:17px;text-align:right;letter-spacing:0">“</span><span class="c" style="display:inline-block;width:34.00px;font-size:15px;letter-spacing:2.00px;">定期</span><span style="display:inline-block;width:17px;text-align:left;letter-spacing:0">”</span><span class="c" style="display:inline-block;width:357.00px;font-size:15px;letter-spacing:2.00px;">时用于使数据发送重启的请求触点，且对各设置</span><span style="display:inline-block;width:28.6px;letter-spacing:0px;">No.</span><span class="c" style="display:inline-block;width:187.00px;font-size:15px;letter-spacing:2.00px;">以下述位模式进行存储。</span></div>
<div class="a dot" style="left:59.60000000000002px;top:600.60px"></div><svg style="left:107px;top:597.10px" width="15" height="8"><path d="M0.5,4.6 H13 M8.6,0.8 L13.4,4.6 L8.6,7.4" stroke="#000" stroke-width="1.1" fill="none"/></svg><div class="a p" style="left:76.5px;top:591.60px;letter-spacing:0.2px;font-size:14px;">OFF</div><div class="a p" style="left:127.39999999999998px;top:591.60px;letter-spacing:0px;font-size:14.2px;transform:scaleX(0.78);transform-origin:0 0;">ON</div><div class="a" style="left:149.2px;top:601.10px;width:2px;height:2px;background:#000"></div><div class="a" style="left:149.2px;top:605.80px;width:2px;height:2px;background:#000"></div><div class="a p" style="left:162.39999999999998px;top:591.60px"><span class="c" style="display:inline-block;width:51.00px;font-size:15px;letter-spacing:2.00px;">有请求</span><span style="display:inline-block;width:9.3px;letter-spacing:0px;">(</span><span class="c" style="display:inline-block;width:68.00px;font-size:15px;letter-spacing:2.00px;">重启指示</span><span style="display:inline-block;width:9.3px;letter-spacing:0px;">)</span></div>
<div class="a dot" style="left:59.60000000000002px;top:629.60px"></div><svg style="left:98px;top:626.10px" width="15" height="8"><path d="M0.5,4.6 H13 M8.6,0.8 L13.4,4.6 L8.6,7.4" stroke="#000" stroke-width="1.1" fill="none"/></svg><div class="a p" style="left:76.5px;top:620.60px;letter-spacing:0px;font-size:14.2px;transform:scaleX(0.78);transform-origin:0 0;">ON</div><div class="a p" style="left:118.39999999999998px;top:620.60px;letter-spacing:0.2px;font-size:14px;">OFF</div><div class="a" style="left:149.7px;top:630.10px;width:2px;height:2px;background:#000"></div><div class="a" style="left:149.7px;top:634.80px;width:2px;height:2px;background:#000"></div><div class="a p" style="left:163px;top:620.60px"><span class="c" style="display:inline-block;width:34.00px;font-size:15px;letter-spacing:2.00px;">完成</span><span style="display:inline-block;width:9.3px;letter-spacing:0px;">(</span><span class="c" style="display:inline-block;width:68.00px;font-size:15px;letter-spacing:2.00px;">重启完成</span><span style="display:inline-block;width:9.3px;letter-spacing:0px;">)</span></div>
<table class="t" style="left:51px;top:652.30px;width:1274px"><col style="width:138px"><col style="width:82px"><col style="width:82px"><col style="width:81px"><col style="width:82px"><col style="width:82px"><col style="width:82px"><col style="width:64px"><col style="width:65px"><col style="width:64px"><col style="width:65px"><col style="width:64px"><col style="width:64px"><col style="width:65px"><col style="width:64px"><col style="width:64px"><col style="width:65px"><tr class="hd"><td><span class="c">地址</span></td><td>b15</td><td>b14</td><td>b13</td><td>b12</td><td>b11</td><td>b10</td><td>b9</td><td>b8</td><td>b7</td><td>b6</td><td>b5</td><td>b4</td><td>b3</td><td>b2</td><td>b1</td><td>b0</td></tr><tr><td>Un\G1098</td><td>16</td><td>15</td><td>14</td><td>13</td><td>12</td><td>11</td><td>10</td><td>9</td><td>8</td><td>7</td><td>6</td><td>5</td><td>4</td><td>3</td><td>2</td><td>1</td></tr><tr><td colspan="17"><span style="color:#777;font-size:11px;position:relative;left:-1.5px;top:1px">⋮</span></td></tr><tr><td>Un\G1101</td><td>64</td><td>63</td><td>62</td><td>61</td><td>60</td><td>59</td><td>58</td><td>57</td><td>56</td><td>55</td><td>54</td><td>53</td><td>52</td><td>51</td><td>50</td><td>49</td></tr></table>
<div class="a sq" style="left:45px;top:769.30px"></div><div class="a h" style="left:71.5px;top:766.80px"><span class="c" style="display:inline-block;width:50.10px;font-size:15.5px;letter-spacing:0.70px;font-weight:500;-webkit-text-stroke:0.3px #000;">各设置</span><span style="display:inline-block;width:31.2px;letter-spacing:1.6px;font-weight:400;font-size:15px;-webkit-text-stroke:0.45px #000;">No.</span><span class="c" style="display:inline-block;width:119.14px;font-size:15.5px;letter-spacing:1.02px;font-weight:500;-webkit-text-stroke:0.3px #000;">的执行状态标志</span><span style="display:inline-block;width:87.2px;letter-spacing:2.0px;font-weight:400;font-size:15px;-webkit-text-stroke:0.45px #000;padding-left:1px;">(Un\G1102</span><span class="c" style="display:inline-block;width:17.00px;font-size:15.5px;letter-spacing:1.00px;font-weight:500;-webkit-text-stroke:0.3px #000;">～</span><span style="display:inline-block;width:88px;letter-spacing:2.0px;font-weight:400;font-size:15px;-webkit-text-stroke:0.45px #000;">Un\G1105)</span></div>
<div class="a p" style="left:52.39999999999998px;top:791.70px"><span class="c" style="display:inline-block;width:68.00px;font-size:15px;letter-spacing:2.00px;">对各设置</span><span style="display:inline-block;width:28.6px;letter-spacing:0px;">No.</span><span class="c" style="display:inline-block;width:306.00px;font-size:15px;letter-spacing:2.00px;">以下述位模式存储数据发送接收的状态。</span></div>
<div class="a p" style="left:122px;top:819.5px"><span class="c">停止中</span>(<span class="c">功能未使用</span>)</div>
  <div class="a" style="left:35.5px;top:66.5px;width:1278.5px;height:230.0px;border:5px solid #fb5153;border-radius:3px"></div>
</div>
<div id="vs" class="a">
  <svg style="left:0;top:0" width="21" height="826"><path d="M5.6,14.4 L10.3,9.4 L15,14.4 Z M5.6,810.6 L10.3,815.8 L15,810.6 Z" fill="#505050"/><rect x="2" y="608" width="17" height="80" fill="#c1c1c1"/></svg>
</div>

<!-- STATUS BAR -->
<div id="status" class="a">
  <span class="a" style="left:5px">(应用篇) MELSEC iQ-R以太网用户手册[SH081283CHN]</span>
  <svg style="left:1462px;top:6px" width="20" height="19"><path d="M1.4,7 V17.6 H18 V11" stroke="#fff" stroke-width="1.7" fill="none"/><path d="M5.6,9.4 L9.4,13.4 L17,2.4" stroke="#fff" stroke-width="1.7" fill="none"/></svg>
  <span class="a" style="left:1578px;font-size:15px">显示倍率</span>
  <div class="a" style="left:1642px;top:0;width:65px;height:28px;background:#f0f0f0;color:#111;font-size:15px;line-height:28px"><span class="a" style="left:8px;top:-1px">90%</span><svg style="left:50px;top:11px" width="8" height="6"><path d="M0.5,0.8 L4,4.6 L7.5,0.8" stroke="#444" stroke-width="1.2" fill="none"/></svg></div>
  <svg style="left:1715px;top:3px" width="17" height="23"><path d="M0,0 H17 V23 H0 Z" fill="#fff"/><path d="M11.5,0 L17,5.5 V0 Z" fill="#27354e"/></svg>
  <span class="a" style="left:1718.5px;top:3.5px;font-size:15.5px;font-weight:bold;color:#4c4c4c">P</span>
  <span class="a" style="left:1749px">SH081283CHN-87B.T1</span>
</div>
</body>
</html>
